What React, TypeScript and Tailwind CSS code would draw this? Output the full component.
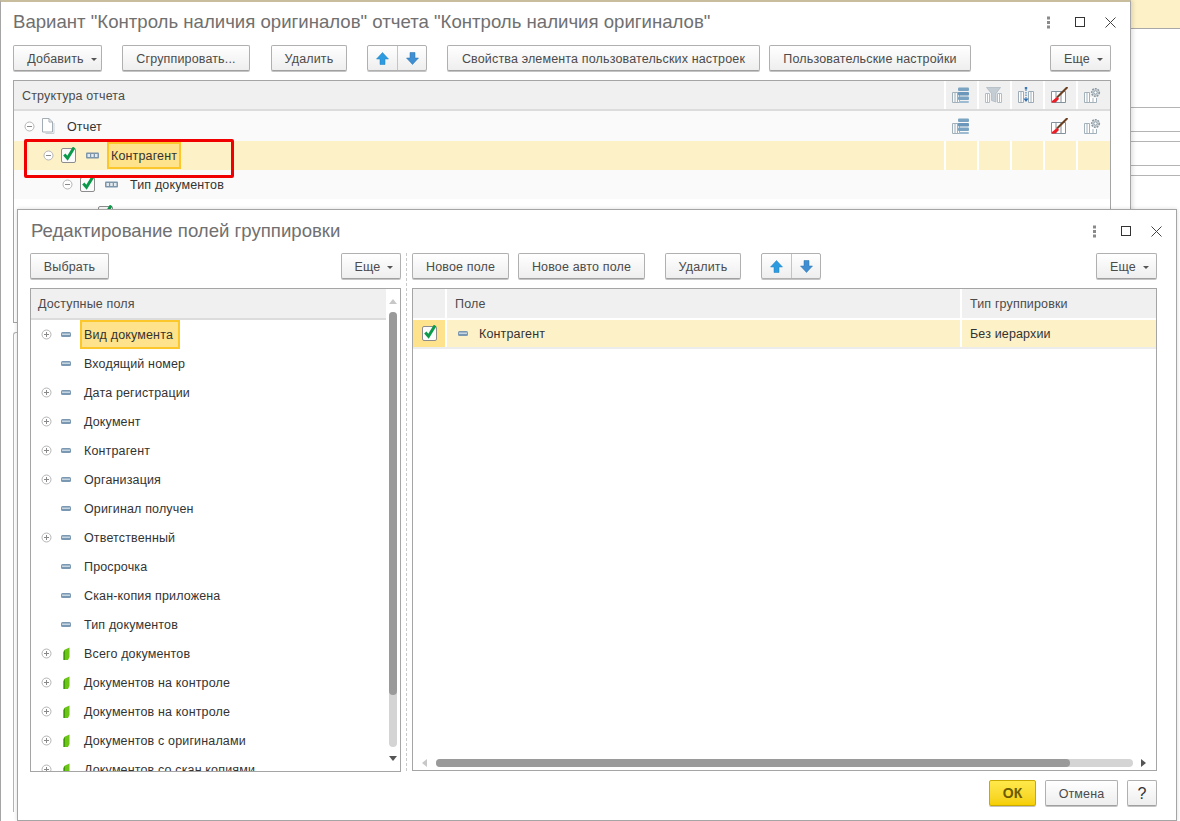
import React from "react";

const Collapse = () => (
  <svg width="11" height="11" viewBox="0 0 11 11" className="shrink-0">
    <circle cx="5.5" cy="5.5" r="4.5" fill="#fff" stroke="#b5b5b5" />
    <path d="M3 5.5h5" stroke="#8a8a8a" />
  </svg>
);
const Expand = () => (
  <svg width="11" height="11" viewBox="0 0 11 11" className="shrink-0">
    <circle cx="5.5" cy="5.5" r="4.5" fill="#fff" stroke="#b5b5b5" />
    <path d="M3 5.5h5M5.5 3v5" stroke="#8a8a8a" />
  </svg>
);
const Doc = () => (
  <svg width="14" height="16" viewBox="0 0 14 16" className="shrink-0">
    <path d="M13 5v10.5H4.5" fill="none" stroke="#c9d0d5" />
    <path d="M1.5 0.5h6.5l3.5 3.5v10h-10z" fill="#fff" stroke="#a3adb5" />
    <path d="M8 0.5v3.5h3.5" fill="none" stroke="#a3adb5" />
  </svg>
);
const Check = () => (
  <svg width="17" height="18" viewBox="0 0 17 18" className="shrink-0">
    <rect x="0.5" y="1.5" width="14" height="14" rx="1.5" fill="#fbfbfb" stroke="#8d8d8d" />
    <path d="M3.3 7.6l3.2 3.6 6.6-10.7" fill="none" stroke="#0b9a4a" strokeWidth="3" />
  </svg>
);
const Group = () => (
  <svg width="13" height="7" viewBox="0 0 13 7" className="shrink-0">
    <rect x="0" y="0.5" width="13" height="6" rx="1" fill="#7e96aa" />
    <rect x="1.5" y="2" width="2.5" height="3" fill="#e3eaf0" />
    <rect x="5.2" y="2" width="2.5" height="3" fill="#e3eaf0" />
    <rect x="9" y="2" width="2.5" height="3" fill="#e3eaf0" />
  </svg>
);
const FieldDash = () => (
  <svg width="10" height="5" viewBox="0 0 10 5" className="shrink-0">
    <rect x="0" y="0" width="10" height="5" rx="1.5" fill="#7b98b3" />
    <rect x="1" y="1.5" width="8" height="1.5" fill="#c6d5e2" />
  </svg>
);
const Res = () => (
  <svg width="7" height="14" viewBox="0 0 7 14" className="shrink-0">
    <path d="M2 2.5L6.5 0.5V10L5 13H0.5V5z" fill="#6cc414" />
    <path d="M0.5 5L2 2.5V13H0.5z" fill="#3f9a08" />
  </svg>
);
const Up = () => (
  <svg width="13" height="13" viewBox="0 0 13 13">
    <path d="M6.5 0.5L12.5 7H9v5.5H4V7H0.5z" fill="#2d9be0" stroke="#1f80bf" strokeWidth="0.5" />
  </svg>
);
const Down = () => (
  <svg width="13" height="13" viewBox="0 0 13 13">
    <path d="M6.5 12.5L12.5 6H9V0.5H4V6H0.5z" fill="#3f8fd2" stroke="#2a70ad" strokeWidth="0.5" />
  </svg>
);
const Caret = () => (
  <svg width="6" height="3" viewBox="0 0 6 3" className="shrink-0">
    <path d="M0 0h6L3 3z" fill="#555" />
  </svg>
);
const Dots = () => (
  <svg width="3" height="13" viewBox="0 0 3 13">
    <rect x="0" y="0.5" width="3" height="3" fill="#8a8a8a" />
    <rect x="0" y="5" width="3" height="3" fill="#8a8a8a" />
    <rect x="0" y="9.5" width="3" height="3" fill="#8a8a8a" />
  </svg>
);
const Maxi = () => (
  <svg width="10" height="10" viewBox="0 0 10 10">
    <rect x="0.5" y="0.5" width="9" height="9" fill="none" stroke="#333" />
  </svg>
);
const Close = () => (
  <svg width="11" height="11" viewBox="0 0 11 11">
    <path d="M0.5 0.5l10 10M10.5 0.5l-10 10" stroke="#444" />
  </svg>
);

const TStruct = () => (
  <svg width="17" height="16" viewBox="0 0 17 16">
    <path d="M0.5 5.5h7v10h-7zM3 6v9M5.5 6v9" fill="#f7f9fa" stroke="#a2b0ba" />
    <rect x="6" y="0.5" width="11" height="3.5" rx="1" fill="#7ba4c2" />
    <rect x="6" y="5" width="11" height="3.5" rx="1" fill="#6b98ba" />
    <rect x="6" y="9.5" width="11" height="3.5" rx="1" fill="#7ba4c2" />
    <rect x="7" y="14" width="10" height="2" rx="1" fill="#9dbcd2" />
  </svg>
);
const TFilter = () => (
  <svg width="17" height="16" viewBox="0 0 17 16">
    <path d="M0.5 6.5h4v9h-4zM2.5 7v8M12.5 6.5h4v9h-4zM14.5 7v8" fill="#fff" stroke="#b2bec7" />
    <path d="M1.5 0.5h14l-4.5 6v8.5l-4.5-1.5v-7z" fill="#c4cdd3" stroke="#a2afb8" strokeWidth="0.6" />
  </svg>
);
const TSort = () => (
  <svg width="16" height="16" viewBox="0 0 16 16">
    <path d="M0.5 4.5h5v11h-5zM3 5v10M10.5 4.5h5v11h-5zM13 5v10" fill="#fff" stroke="#9cabb6" />
    <path d="M8 2.5v11" stroke="#2a6fb5" strokeDasharray="1.5 1" />
    <path d="M5.5 11.5h5L8 15z" fill="#2a6fb5" />
    <rect x="6.8" y="0" width="2.4" height="2.4" fill="#3a76b0" />
  </svg>
);
const TBrush = () => (
  <svg width="17" height="16" viewBox="0 0 17 16">
    <path d="M0.5 4.5h14v11h-14zM5 5v10M10 5v10" fill="#fff" stroke="#82919c" />
    <path d="M16.5 0L6 10.5" stroke="#6b3f1f" strokeWidth="2" />
    <path d="M6.5 9.5L1 14V15.5H4.5L8 12z" fill="#ee1c25" />
  </svg>
);
const TGear = () => (
  <svg width="17" height="15" viewBox="0 0 17 15">
    <path d="M0.5 4.5h5v10h-5zM3 5v9M5.5 9v5.5h7V10M9 10v4" fill="#fff" stroke="#a3b1bb" />
    <circle cx="11.5" cy="4.5" r="3.8" fill="#d5dade" stroke="#8c9aa4" strokeWidth="1.6" strokeDasharray="1.8 1" />
    <circle cx="11.5" cy="4.5" r="1.7" fill="#fff" stroke="#8c9aa4" />
  </svg>
);

function Btn({ className, children }: { className: string; children: React.ReactNode }) {
  return (
    <div
      className={
        "flex h-[26px] items-center justify-center gap-[7px] rounded-[2px] border border-[#b0b0b0] border-b-[#a0a0a0] bg-linear-to-b from-white to-[#eeeeee] pt-[2px] whitespace-nowrap text-[#4b4b4b] shadow-[0_1px_0_#c4c4c4] " +
        className
      }
    >
      {children}
    </div>
  );
}

function Arrows() {
  return (
    <div className="ml-[20px] flex h-[26px] w-[60px] rounded-[2px] border border-[#b0b0b0] bg-linear-to-b from-white to-[#eeeeee] shadow-[0_1px_0_#c4c4c4]">
      <div className="flex w-[30px] items-center justify-center border-r border-[#c4c4c4]">
        <Up />
      </div>
      <div className="flex flex-1 items-center justify-center">
        <Down />
      </div>
    </div>
  );
}

function TitleBar({ title, className }: { title: string; className: string }) {
  return (
    <div className={"flex items-center text-[18.6px] leading-[22px] tracking-normal text-[#707070] " + className}>
      <span className="flex-1 whitespace-nowrap">{title}</span>
      <Dots />
      <div className="ml-[25px] flex w-[10px] justify-center">
        <Maxi />
      </div>
      <div className="ml-[20px] flex w-[11px] justify-center">
        <Close />
      </div>
    </div>
  );
}

const IconCell = ({ children, className }: { children?: React.ReactNode; className: string }) => (
  <div className={"flex w-[33px] shrink-0 items-center justify-center border-l-2 pr-[3px] " + className}>{children}</div>
);

const fields: [string, "d" | "r", boolean][] = [
  ["Вид документа", "d", true],
  ["Входящий номер", "d", false],
  ["Дата регистрации", "d", true],
  ["Документ", "d", true],
  ["Контрагент", "d", true],
  ["Организация", "d", true],
  ["Оригинал получен", "d", false],
  ["Ответственный", "d", true],
  ["Просрочка", "d", false],
  ["Скан-копия приложена", "d", false],
  ["Тип документов", "d", false],
  ["Всего документов", "r", true],
  ["Документов на контроле", "r", true],
  ["Документов на контроле", "r", true],
  ["Документов с оригиналами", "r", true],
  ["Документов со скан копиями", "r", true],
];

export default function App() {
  return (
    <div className="relative h-[821px] w-[1180px] overflow-hidden bg-white font-['Liberation_Sans',Arial,sans-serif] text-[12.5px] tracking-[0.15px] text-[#333]">
      {/* page behind the windows */}
      <div className="absolute left-[1130px] top-0 h-[29px] w-[50px] border-b border-[#a8a8a8] bg-[#fdf1c7]" />
      <div className="absolute left-[1130px] top-[107px] h-[25px] w-[50px] border-y border-[#b4b4b4]" />
      <div className="absolute left-[1130px] top-[141px] h-[25px] w-[50px] border-y border-[#b4b4b4]" />
      <div className="absolute left-[1130px] top-[165px] h-[11px] w-[50px] border-b border-[#b4b4b4]" />

      {/* window 1 */}
      <div className="absolute left-0 top-0 h-[821px] w-[1131px] border-x border-t-2 border-[#a5a5a5] border-t-[#c8bd9c] bg-white shadow-[2px_0_4px_rgba(0,0,0,0.12)]">
        <TitleBar
          title={'Вариант "Контроль наличия оригиналов" отчета "Контроль наличия оригиналов"'}
          className="ml-[12px] mr-[14px] mt-[9px]"
        />
        <div className="ml-[12px] mr-[19px] mt-[12px] flex">
          <Btn className="w-[89px] pl-[9px]">
            Добавить <Caret />
          </Btn>
          <Btn className="ml-[20px] w-[128px]">Сгруппировать...</Btn>
          <Btn className="ml-[21px] w-[76px]">Удалить</Btn>
          <Arrows />
          <Btn className="ml-[20px] w-[313px]">Свойства элемента пользовательских настроек</Btn>
          <Btn className="ml-[9px] w-[202px]">Пользовательские настройки</Btn>
          <Btn className="ml-auto w-[61px] pl-[6px]">
            Еще <Caret />
          </Btn>
        </div>
        <div className="ml-[12px] mr-[19px] mt-[9px] h-[243px] border border-[#a5a5a5]">
          <div className="flex h-[30px] border-b-2 border-[#dcdcdc] bg-[#f0f0f0] pr-[1px]">
            <div className="flex-1 pl-[8px] leading-[30px] text-[#4b4b4b]">Структура отчета</div>
            <IconCell className="border-white"><TStruct /></IconCell>
            <IconCell className="border-white"><TFilter /></IconCell>
            <IconCell className="border-white"><TSort /></IconCell>
            <IconCell className="border-white"><TBrush /></IconCell>
            <IconCell className="border-white"><TGear /></IconCell>
          </div>
          <div className="flex h-[30px] bg-[#fafafa] pr-[1px]">
            <div className="flex flex-1 items-center gap-[6px] pl-[10px]">
              <Collapse />
              <Doc />
              <span className="ml-[6px] pt-[2px]">Отчет</span>
            </div>
            <IconCell className="border-transparent"><TStruct /></IconCell>
            <IconCell className="border-transparent" />
            <IconCell className="border-transparent" />
            <IconCell className="border-transparent"><TBrush /></IconCell>
            <IconCell className="border-transparent"><TGear /></IconCell>
          </div>
          <div className="flex h-[29px] bg-[#fdf1c7] pr-[1px]">
            <div className="flex flex-1 items-center pl-[29px]">
              <Collapse />
              <span className="ml-[7px] flex"><Check /></span>
              <span className="ml-[8px] flex"><Group /></span>
              <span className="ml-[8px] flex h-[27px] items-center border-2 border-[#fbc72b] bg-[#fee28c] px-[2px] pt-[2px]">Контрагент</span>
            </div>
            <IconCell className="border-white" />
            <IconCell className="border-white" />
            <IconCell className="border-white" />
            <IconCell className="border-white" />
            <IconCell className="border-white" />
          </div>
          <div className="flex h-[29px] items-center bg-[#fafafa] pl-[48px]">
            <Collapse />
            <span className="ml-[7px] flex"><Check /></span>
            <span className="ml-[8px] flex"><Group /></span>
            <span className="ml-[12px] pt-[2px]">Тип документов</span>
          </div>
          <div className="flex h-[29px] items-center pl-[84px]">
            <Check />
            <span className="ml-[42px] pt-[2px]">Документ</span>
          </div>
        </div>
        {/* lower group of the first window, mostly hidden */}
        <div className="ml-[12px] mr-[19px] mt-[9px] h-[480px] rounded-tl-[3px] border-l border-t border-[#b4b4b4]" />
      </div>

      {/* highlight frame drawn over the first window */}
      <div className="absolute left-[24px] top-[139px] h-[39px] w-[210px] rounded-[2px] border-[3px] border-[#f00000]" />

      {/* window 2 */}
      <div className="absolute left-[17px] top-[209px] flex h-[612px] w-[1160px] flex-col border border-[#a5a5a5] bg-white shadow-[0_0_4px_rgba(0,0,0,0.15)]">
        <TitleBar title="Редактирование полей группировки" className="ml-[13px] mr-[14px] mt-[10px]" />
        <div className="mt-[11px] flex h-[518px]">
          <div className="ml-[12px] flex w-[371px] shrink-0 flex-col">
            <div className="flex justify-between">
              <Btn className="w-[79px]">Выбрать</Btn>
              <Btn className="w-[60px] pl-[6px]">
                Еще <Caret />
              </Btn>
            </div>
            <div className="mt-[9px] flex h-[484px] border border-[#a5a5a5]">
              <div className="min-w-0 flex-1 overflow-hidden">
                <div className="h-[31px] border-b-2 border-[#dcdcdc] bg-[#f0f0f0] pl-[7px] leading-[30px] text-[#4b4b4b]">
                  Доступные поля
                </div>
                {fields.map(([name, kind, exp], i) => (
                  <div key={i} className="flex h-[29px] items-center">
                    <span className="ml-[10px] flex w-[11px]">{exp && <Expand />}</span>
                    <span className="ml-[9px] flex w-[10px] justify-center">
                      {kind === "d" ? <FieldDash /> : <Res />}
                    </span>
                    {i === 0 ? (
                      <span className="ml-[9px] flex h-[29px] items-center border-2 border-[#fbc72b] bg-[#fee28c] pl-[2px] pr-[5px] pt-[2px] whitespace-nowrap">
                        {name}
                      </span>
                    ) : (
                      <span className="ml-[13px] pt-[2px] whitespace-nowrap">{name}</span>
                    )}
                  </div>
                ))}
              </div>
              <div className="flex w-[14px] shrink-0 flex-col items-center">
                <svg width="8" height="5" viewBox="0 0 8 5" className="mt-[10px]">
                  <path d="M4 0l4 5H0z" fill="#c8c8c8" />
                </svg>
                <div className="mt-[8px] h-[435px] w-[8px] rounded-[4px] bg-[#d4d4d4]">
                  <div className="h-[383px] w-[8px] rounded-[4px] bg-[#9a9a9a]" />
                </div>
                <svg width="8" height="5" viewBox="0 0 8 5" className="mt-[9px]">
                  <path d="M4 5l4-5H0z" fill="#555" />
                </svg>
              </div>
            </div>
          </div>
          <div className="mx-[5px] w-0 border-l border-dashed border-[#c8c8c8]" />
          <div className="flex min-w-0 flex-1 flex-col pr-[19px]">
            <div className="flex">
              <Btn className="w-[97px]">Новое поле</Btn>
              <Btn className="ml-[9px] w-[127px]">Новое авто поле</Btn>
              <Btn className="ml-[20px] w-[76px]">Удалить</Btn>
              <Arrows />
              <Btn className="ml-auto w-[61px] pl-[6px]">
                Еще <Caret />
              </Btn>
            </div>
            <div className="mt-[9px] flex h-[484px] flex-col border border-[#a5a5a5]">
              <div className="flex h-[31px] border-b-2 border-white bg-[#f0f0f0] text-[#4b4b4b]">
                <div className="w-[34px] border-r-2 border-white" />
                <div className="w-[515px] border-r-2 border-white pl-[8px] leading-[30px]">Поле</div>
                <div className="flex-1 pl-[8px] leading-[30px]">Тип группировки</div>
              </div>
              <div className="flex h-[29px] border-b-2 border-[#ececec] bg-[#fdf1c7]">
                <div className="flex w-[34px] items-center justify-center border-r-2 border-white bg-[#fee28c] pl-[2px]">
                  <Check />
                </div>
                <div className="flex w-[515px] items-center border-r-2 border-white pl-[11px]">
                  <FieldDash />
                  <span className="ml-[11px] pt-[2px]">Контрагент</span>
                </div>
                <div className="flex flex-1 items-center pl-[8px] pt-[2px]">Без иерархии</div>
              </div>
              <div className="flex-1" />
              <div className="flex h-[14px] items-start pl-[9px] pt-[3px]">
                <svg width="5" height="8" viewBox="0 0 5 8">
                  <path d="M0 4l5-4v8z" fill="#c8c8c8" />
                </svg>
                <div className="ml-[9px] h-[8px] w-[697px] rounded-[4px] bg-[#d4d4d4]">
                  <div className="h-[8px] w-[634px] rounded-[4px] bg-[#9a9a9a]" />
                </div>
                <svg width="5" height="8" viewBox="0 0 5 8" className="ml-[8px]">
                  <path d="M5 4L0 0v8z" fill="#555" />
                </svg>
              </div>
            </div>
          </div>
        </div>
        <div className="mr-[19px] mt-[9px] flex justify-end">
          <div className="flex h-[26px] w-[47px] items-center justify-center rounded-[2px] border border-[#c9a800] bg-linear-to-b from-[#ffe94a] to-[#f5cf00] text-[14px] font-bold text-[#6b5a00] shadow-[0_1px_0_#c4c4c4]">
            ОК
          </div>
          <Btn className="ml-[9px] w-[73px]">Отмена</Btn>
          <Btn className="ml-[9px] w-[30px] text-[16px] text-[#333]">?</Btn>
        </div>
      </div>
    </div>
  );
}
